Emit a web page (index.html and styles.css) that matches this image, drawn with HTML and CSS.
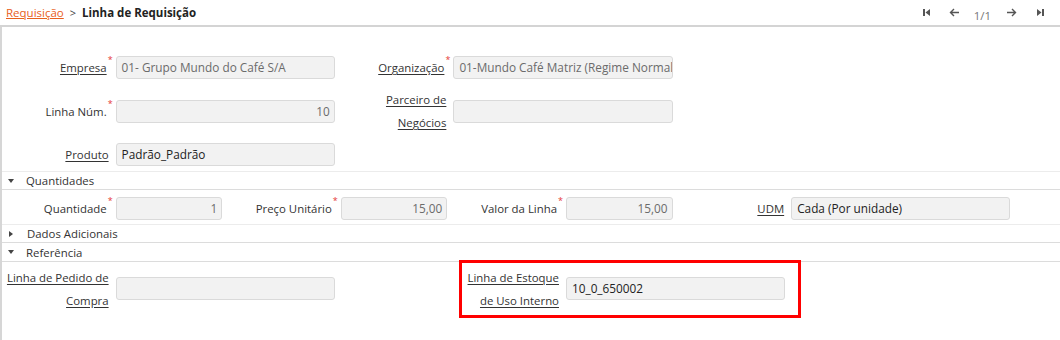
FILE: index.html
```html
<!DOCTYPE html>
<html lang="pt-BR">
<head>
    <meta charset="UTF-8">
    <title>Linha de Requisição</title>
    <link rel="stylesheet" href="styles.css">
</head>
<body>
    <div class="topbar">
        <div class="crumbs">
            <a class="crumb-link" href="#">Requisição</a>
            <span class="crumb-sep">&gt;</span>
            <span class="crumb-current">Linha de Requisição</span>
        </div>
        <div class="pager">
            <svg class="pager-icon first" width="9" height="9" viewBox="0 0 9 9"><rect x="1" y="1" width="2" height="7" fill="#555"/><path d="M8 1 L3.5 4.5 L8 8 Z" fill="#555"/></svg>
            <svg class="pager-icon prev" width="11" height="9" viewBox="0 0 11 9"><path d="M10 4.5 H1.5 M5 1 L1.5 4.5 L5 8" fill="none" stroke="#555" stroke-width="1.4"/></svg>
            <span class="pager-count">1/1</span>
            <svg class="pager-icon next" width="11" height="9" viewBox="0 0 11 9"><path d="M1 4.5 H9.5 M6 1 L9.5 4.5 L6 8" fill="none" stroke="#555" stroke-width="1.4"/></svg>
            <svg class="pager-icon last" width="9" height="9" viewBox="0 0 9 9"><path d="M1 1 L5.5 4.5 L1 8 Z" fill="#555"/><rect x="6" y="1" width="2" height="7" fill="#555"/></svg>
        </div>
    </div>

    <div class="panel">
        <div class="grid main-grid">
            <label class="lbl row-start"><u>Empresa</u><sup class="req">*</sup></label>
            <div class="field span2">01- Grupo Mundo do Café S/A</div>
            <label class="lbl"><u>Organização</u><sup class="req">*</sup></label>
            <div class="field span2">01-Mundo Café Matriz (Regime Normal)</div>

            <label class="lbl row-start">Linha Núm.<sup class="req">*</sup></label>
            <div class="field span2 num">10</div>
            <label class="lbl"><u>Parceiro de</u><br><u>Negócios</u></label>
            <div class="field span2"></div>

            <label class="lbl row-start"><u>Produto</u></label>
            <div class="field span2 dark">Padrão_Padrão</div>
        </div>

        <div class="section-head"><span class="caret down"></span>Quantidades</div>
        <div class="grid qty-grid">
            <label class="lbl row-start">Quantidade<sup class="req">*</sup></label>
            <div class="field num">1</div>
            <label class="lbl">Preço Unitário<sup class="req">*</sup></label>
            <div class="field num">15,00</div>
            <label class="lbl">Valor da Linha<sup class="req">*</sup></label>
            <div class="field num">15,00</div>
            <label class="lbl"><u>UDM</u></label>
            <div class="field span2 dark">Cada (Por unidade)</div>
        </div>

        <div class="section-head"><span class="caret right"></span>Dados Adicionais</div>
        <div class="section-head tall"><span class="caret down"></span>Referência</div>
        <div class="grid ref-grid">
            <label class="lbl row-start"><u>Linha de Pedido de</u><br><u>Compra</u></label>
            <div class="field span2"></div>
            <label class="lbl col-5"><u>Linha de Estoque</u><br><u>de Uso Interno</u></label>
            <div class="field span2 dark">10_0_650002</div>
        </div>

        <!-- marca de destaque em volta do campo -->
        <div class="highlight"></div>
    </div>
</body>
</html>
```

FILE: styles.css
```css
body {
    margin: 0;
    font-family: 'Open Sans', 'Noto Sans', sans-serif;
    font-size: 11.4px;
    color: #333;
    background: #fff;
    width: 1060px;
    height: 340px;
    overflow: hidden;
}
.topbar {
    height: 25px;
    border-bottom: 2px solid #d4d4d4;
    display: flex;
    align-items: center;
    justify-content: space-between;
    padding: 0 15px 0 6px;
}
.crumbs {
    font-size: 11.5px;
    display: flex;
    align-items: center;
    gap: 6px;
}
.crumb-link {
    color: #e8601c;
    text-decoration: underline;
}
.crumb-sep {
    color: #444;
    font-size: 11px;
}
.crumb-current {
    font-weight: bold;
    color: #222;
}
.pager {
    display: flex;
    align-items: center;
}
.pager-icon.prev {
    margin-left: 18px;
}
.pager-count {
    color: #777;
    font-size: 11.5px;
    padding-top: 5px;
    margin-left: 14px;
}
.pager-icon.next {
    margin-left: 15px;
}
.pager-icon.last {
    margin-left: 19px;
}
.panel {
    position: relative;
    border-left: 2px solid #d6d6d6;
    height: 313px;
}
.grid {
    display: grid;
    grid-template-columns: repeat(9, 106.6px);
    grid-auto-rows: 23px;
    column-gap: 6px;
    align-items: center;
    padding-left: 1px;
}
.row-start {
    grid-column-start: 1;
}
.col-5 {
    grid-column-start: 5;
}
.main-grid {
    row-gap: 20.5px;
    padding-top: 29px;
    padding-bottom: 5px;
    border-bottom: 1px solid #ececec;
}
.qty-grid {
    padding-top: 7px;
    padding-bottom: 4px;
    border-bottom: 1px solid #ececec;
}
.ref-grid {
    padding-top: 15px;
}
.lbl {
    text-align: right;
    line-height: 23px;
    white-space: nowrap;
    padding-right: 1px;
}
.lbl u {
    text-underline-offset: 2px;
}
.req {
    color: #e53935;
    font-size: 9px;
    vertical-align: top;
    line-height: 9px;
    position: relative;
    top: -1px;
    margin-left: 1px;
    margin-right: -4px;
}
.field {
    height: 21px;
    line-height: 21px;
    background: #f2f2f2;
    border: 1px solid #dadada;
    border-radius: 3px;
    padding: 0 5px;
    color: #6b6b6b;
    font-size: 11.8px;
    white-space: nowrap;
    overflow: hidden;
}
.span2 {
    grid-column: span 2;
}
.num {
    text-align: right;
    padding-right: 4px;
}
.dark {
    color: #222;
}
.section-head {
    height: 17px;
    line-height: 17px;
    border-bottom: 1px solid #dcdcdc;
    padding-left: 6px;
    display: flex;
    align-items: center;
    color: #333;
}
.section-head.tall {
    height: 18px;
}
.caret {
    width: 0;
    height: 0;
    margin-right: 12px;
}
.caret.down {
    border-left: 3.5px solid transparent;
    border-right: 3.5px solid transparent;
    border-top: 4px solid #444;
}
.caret.right {
    border-top: 3.5px solid transparent;
    border-bottom: 3.5px solid transparent;
    border-left: 4px solid #444;
    margin-left: 1px;
    margin-right: 14px;
}
.highlight {
    position: absolute;
    left: 457px;
    top: 233px;
    width: 336px;
    height: 52px;
    border: 3px solid #ff0000;
}
```
